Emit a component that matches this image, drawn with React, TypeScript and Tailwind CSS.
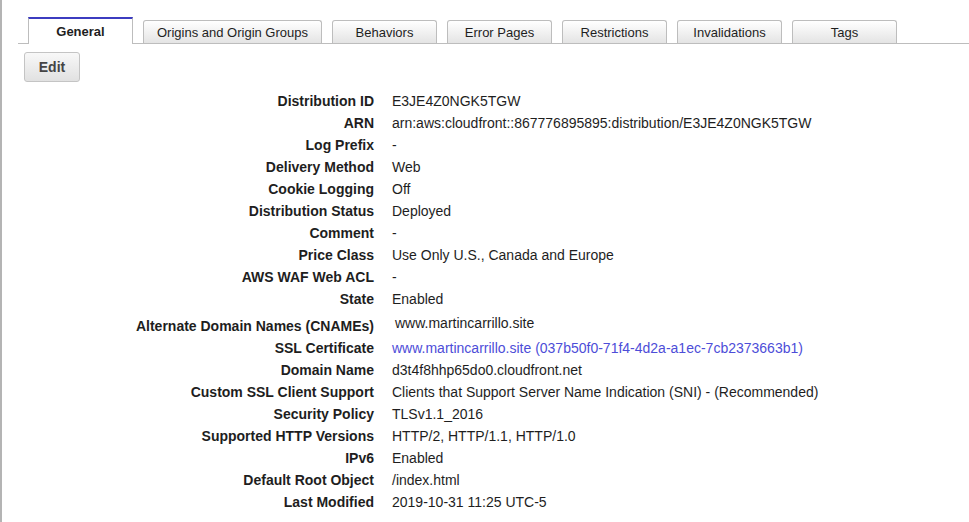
import React from 'react'

const tabs = [
  { label: 'General', w: 'w-[105px]', active: true },
  { label: 'Origins and Origin Groups', w: 'w-[179px]' },
  { label: 'Behaviors', w: 'w-[105px]' },
  { label: 'Error Pages', w: 'w-[105px]' },
  { label: 'Restrictions', w: 'w-[105px]' },
  { label: 'Invalidations', w: 'w-[105px]' },
  { label: 'Tags', w: 'w-[105px]' },
]

const topRows: [string, string][] = [
  ['Distribution ID', 'E3JE4Z0NGK5TGW'],
  ['ARN', 'arn:aws:cloudfront::867776895895:distribution/E3JE4Z0NGK5TGW'],
  ['Log Prefix', '-'],
  ['Delivery Method', 'Web'],
  ['Cookie Logging', 'Off'],
  ['Distribution Status', 'Deployed'],
  ['Comment', '-'],
  ['Price Class', 'Use Only U.S., Canada and Europe'],
  ['AWS WAF Web ACL', '-'],
  ['State', 'Enabled'],
]

const bottomRows: [string, string][] = [
  ['Domain Name', 'd3t4f8hhp65do0.cloudfront.net'],
  ['Custom SSL Client Support', 'Clients that Support Server Name Indication (SNI) - (Recommended)'],
  ['Security Policy', 'TLSv1.1_2016'],
  ['Supported HTTP Versions', 'HTTP/2, HTTP/1.1, HTTP/1.0'],
  ['IPv6', 'Enabled'],
  ['Default Root Object', '/index.html'],
  ['Last Modified', '2019-10-31 11:25 UTC-5'],
]

function Row({ label, children }: { label: string; children: React.ReactNode }) {
  return (
    <>
      <div className="text-right font-bold leading-[22px]">{label}</div>
      <div className="leading-[22px]">{children}</div>
    </>
  )
}

export default function App() {
  return (
    <div
      className="h-screen overflow-hidden border-l-2 border-[#b4b4b4] bg-white text-[14px] text-[#1e1e1e]"
      style={{ fontFamily: '"Liberation Sans", Arial, sans-serif' }}
    >
      <div className="ml-[16px] mt-[17px] flex items-end gap-[10px] border-b border-[#bdbdbd] pl-[10px]">
        {tabs.map((t) =>
          t.active ? (
            <div
              key={t.label}
              className={`relative z-10 -mb-px flex h-[27px] ${t.w} items-center justify-center border-x border-t-2 border-x-[#bdbdbd] border-t-[#3c3cc0] bg-white text-[13px] font-bold`}
            >
              {t.label}
            </div>
          ) : (
            <div
              key={t.label}
              className={`flex h-[23px] ${t.w} items-center justify-center rounded-t-[3px] border-x border-t border-[#bdbdbd] bg-gradient-to-b from-white to-[#e4e4e4] pt-[1px] text-[13px]`}
            >
              {t.label}
            </div>
          ),
        )}
      </div>

      <button className="ml-[22px] mt-[8px] flex h-[30px] w-[56px] items-center justify-center rounded-[3px] border border-[#c4c4c4] bg-gradient-to-b from-[#f8f8f8] to-[#e1e1e1] font-bold text-[#444]">
        Edit
      </button>

      <div className="mt-[8px] grid grid-cols-[372px_1fr] gap-x-[18px]">
        {topRows.map(([l, v]) => (
          <Row key={l} label={l}>
            {v}
          </Row>
        ))}
        <div className="mt-[5px] text-right font-bold leading-[22px]">Alternate Domain Names (CNAMEs)</div>
        <div className="mt-[2px] pb-[3px] pl-[3px] leading-[22px]">www.martincarrillo.site</div>
        <Row label="SSL Certificate">
          <a className="text-[#4d4dd8]" href="#">
            www.martincarrillo.site (037b50f0-71f4-4d2a-a1ec-7cb2373663b1)
          </a>
        </Row>
        {bottomRows.map(([l, v]) => (
          <Row key={l} label={l}>
            {v}
          </Row>
        ))}
      </div>
    </div>
  )
}
